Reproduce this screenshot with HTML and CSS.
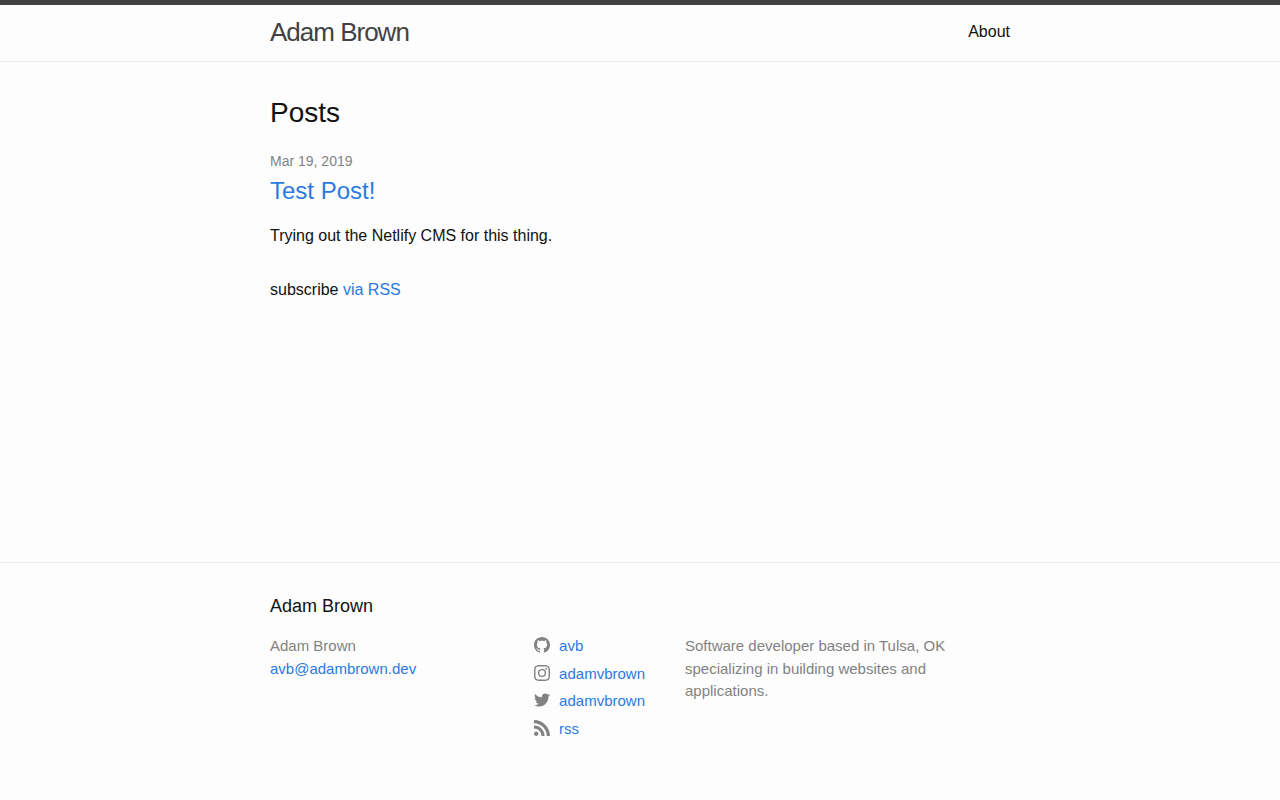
FILE: index.html
```html
<!DOCTYPE html>
<html lang="en">
<head>
    <meta charset="UTF-8">
    <meta name="viewport" content="width=device-width, initial-scale=1.0">
    <title>Adam Brown</title>
    <link rel="stylesheet" href="styles.css">
</head>
<body>
    <header class="site-header">
        <div class="wrapper header-row">
            <a class="site-title" href="/">Adam Brown</a>
            <nav class="site-nav">
                <a class="page-link" href="/about/">About</a>
            </nav>
        </div>
    </header>

    <main class="page-content">
        <div class="wrapper">
            <h2 class="post-list-heading">Posts</h2>
            <ul class="post-list">
                <li>
                    <span class="post-meta">Mar 19, 2019</span>
                    <h3 class="post-title">
                        <a class="post-link" href="/test-post/">Test Post!</a>
                    </h3>
                    <p>Trying out the Netlify CMS for this thing.</p>
                </li>
            </ul>
            <p class="rss-subscribe">subscribe <a href="/feed.xml">via RSS</a></p>
        </div>
    </main>

    <footer class="site-footer">
        <div class="wrapper">
            <h2 class="footer-heading">Adam Brown</h2>
            <div class="footer-cols">
                <ul class="contact-list footer-col-1">
                    <li>Adam Brown</li>
                    <li><a href="mailto:avb@adambrown.dev">avb@adambrown.dev</a></li>
                </ul>
                <ul class="social-list footer-col-2">
                    <li>
                        <a href="https://github.com/avb">
                            <svg class="svg-icon" viewBox="0 0 16 16" aria-hidden="true"><path fill-rule="evenodd" d="M8 0C3.58 0 0 3.582 0 8c0 3.535 2.292 6.533 5.47 7.59.4.075.547-.172.547-.385 0-.19-.007-.693-.01-1.36-2.226.483-2.695-1.073-2.695-1.073-.364-.924-.89-1.17-.89-1.17-.725-.496.056-.486.056-.486.803.056 1.225.824 1.225.824.714 1.223 1.873.87 2.33.665.072-.517.278-.87.507-1.07-1.777-.2-3.644-.888-3.644-3.953 0-.873.31-1.587.823-2.147-.083-.202-.358-1.015.077-2.117 0 0 .672-.215 2.2.82.638-.178 1.323-.266 2.003-.27.68.004 1.364.092 2.003.27 1.527-1.035 2.198-.82 2.198-.82.437 1.102.163 1.915.08 2.117.513.56.823 1.274.823 2.147 0 3.073-1.87 3.75-3.653 3.947.287.246.543.735.543 1.48 0 1.07-.01 1.933-.01 2.195 0 .215.144.463.55.385C13.71 14.53 16 11.534 16 8c0-4.418-3.582-8-8-8z"/></svg>
                            <span>avb</span>
                        </a>
                    </li>
                    <li>
                        <a href="https://instagram.com/adamvbrown">
                            <svg class="svg-icon" viewBox="0 0 16 16" aria-hidden="true"><path fill-rule="evenodd" d="M8 0C5.827 0 5.555.01 4.702.048 3.85.087 3.269.222 2.76.42a3.92 3.92 0 0 0-1.417.923A3.92 3.92 0 0 0 .42 2.76C.222 3.269.087 3.85.048 4.702.01 5.555 0 5.827 0 8s.01 2.445.048 3.298c.039.852.174 1.433.372 1.942.205.526.478.972.923 1.417.445.445.891.718 1.417.923.509.198 1.09.333 1.942.372C5.555 15.99 5.827 16 8 16s2.445-.01 3.298-.048c.852-.039 1.433-.174 1.942-.372a3.92 3.92 0 0 0 1.417-.923 3.92 3.92 0 0 0 .923-1.417c.198-.509.333-1.09.372-1.942.038-.853.048-1.125.048-3.298s-.01-2.445-.048-3.298c-.039-.852-.174-1.433-.372-1.942a3.92 3.92 0 0 0-.923-1.417A3.92 3.92 0 0 0 13.24.42c-.509-.198-1.09-.333-1.942-.372C10.445.01 10.173 0 8 0zm0 1.441c2.136 0 2.389.009 3.232.047.78.036 1.203.166 1.485.276.374.145.64.318.92.598.28.28.453.546.598.92.11.282.24.705.276 1.485.038.843.047 1.096.047 3.233s-.009 2.389-.047 3.232c-.036.78-.166 1.203-.276 1.485-.145.374-.318.64-.598.92-.28.28-.546.453-.92.598-.282.11-.705.24-1.485.276-.843.038-1.096.047-3.232.047s-2.39-.009-3.233-.047c-.78-.036-1.203-.166-1.485-.276a2.48 2.48 0 0 1-.92-.598 2.48 2.48 0 0 1-.598-.92c-.11-.282-.24-.705-.276-1.485-.038-.843-.047-1.096-.047-3.232s.009-2.39.047-3.233c.036-.78.166-1.203.276-1.485.145-.374.318-.64.598-.92.28-.28.546-.453.92-.598.282-.11.705-.24 1.485-.276C5.61 1.45 5.864 1.441 8 1.441zM8 3.892a4.108 4.108 0 1 0 0 8.216 4.108 4.108 0 0 0 0-8.216zm0 6.775a2.667 2.667 0 1 1 0-5.334 2.667 2.667 0 0 1 0 5.334zm5.23-6.937a.96.96 0 1 1-1.92 0 .96.96 0 0 1 1.92 0z"/></svg>
                            <span>adamvbrown</span>
                        </a>
                    </li>
                    <li>
                        <a href="https://twitter.com/adamvbrown">
                            <svg class="svg-icon" viewBox="0 0 16 16" aria-hidden="true"><path d="M16 3.038c-.59.26-1.22.437-1.885.517.677-.407 1.198-1.05 1.443-1.816-.634.375-1.337.648-2.085.795-.598-.638-1.45-1.036-2.396-1.036-1.812 0-3.282 1.468-3.282 3.28 0 .258.03.51.085.75C5.152 5.39 2.733 4.084 1.114 2.1.83 2.583.67 3.147.67 3.75c0 1.14.58 2.143 1.46 2.732-.538-.017-1.045-.165-1.487-.41v.04c0 1.59 1.13 2.918 2.633 3.22-.276.074-.566.114-.865.114-.21 0-.416-.02-.617-.058.418 1.304 1.63 2.253 3.067 2.28-1.124.88-2.54 1.404-4.077 1.404-.265 0-.526-.015-.783-.045 1.453.93 3.178 1.474 5.032 1.474 6.038 0 9.34-5 9.34-9.338 0-.143-.004-.284-.01-.425.64-.463 1.198-1.04 1.638-1.7z"/></svg>
                            <span>adamvbrown</span>
                        </a>
                    </li>
                    <li>
                        <a href="/feed.xml">
                            <svg class="svg-icon" viewBox="0 0 16 16" aria-hidden="true"><path d="M12.8 16C12.8 8.978 7.022 3.2 0 3.2V0c8.777 0 16 7.223 16 16h-3.2zM2.194 11.61c1.21 0 2.195.985 2.195 2.196 0 1.21-.99 2.194-2.2 2.194C.98 16 0 15.017 0 13.806c0-1.21.983-2.195 2.194-2.195zM10.606 16h-3.11c0-4.113-3.383-7.497-7.496-7.497v-3.11c5.818 0 10.606 4.79 10.606 10.607z"/></svg>
                            <span>rss</span>
                        </a>
                    </li>
                </ul>
                <p class="footer-col-3">Software developer based in Tulsa, OK specializing in building websites and applications.</p>
            </div>
        </div>
    </footer>
</body>
</html>
```
FILE: styles.css
```css
* { margin: 0; padding: 0; box-sizing: border-box; }
body {
    display: flex;
    flex-direction: column;
    min-height: 100vh;
    font-family: "Liberation Sans", Arial, sans-serif;
    font-size: 16px;
    line-height: 24px;
    color: #111;
    background: #fdfdfd;
}
a { color: #2a7ae2; text-decoration: none; }
a:hover { color: #111; text-decoration: underline; }
ul { list-style: none; }
h2, h3 { font-weight: 400; }

.wrapper {
    width: 100%;
    max-width: 800px;
    margin: 0 auto;
    padding: 0 30px;
}

/* Header */
.site-header {
    border-top: 5px solid #424242;
    border-bottom: 1px solid #e8e8e8;
}
.header-row {
    display: flex;
    justify-content: space-between;
    line-height: 54px;
    min-height: 56px;
}
.site-title {
    font-size: 26px;
    font-weight: 300;
    letter-spacing: -1px;
    color: #424242;
}
.page-link { color: #111; }

/* Posts */
.page-content { flex: 1; padding: 30px 0; }
.post-list-heading {
    font-size: 28px;
    line-height: 42px;
    margin-bottom: 15px;
}
.post-list { margin-bottom: 30px; }
.post-meta { font-size: 14px; color: #828282; }
.post-title {
    font-size: 24px;
    line-height: 36px;
    margin-bottom: 15px;
}

/* Footer */
.site-footer {
    border-top: 1px solid #e8e8e8;
    padding: 30px 0;
    min-height: 238px;
}
.footer-heading {
    font-size: 18px;
    line-height: 27px;
    margin-bottom: 15px;
}
.footer-cols {
    display: flex;
    font-size: 15px;
    line-height: 1.5;
    color: #828282;
}
.footer-col-1 { flex: 1; }
.footer-col-2 { padding: 0 40px 0 15px; }
.footer-col-3 { width: 325px; padding-right: 60px; }
.social-list li { margin-bottom: 5px; }
.social-list a { display: flex; align-items: flex-start; }
.svg-icon {
    width: 16px;
    height: 16px;
    margin: 2px 9px 0 0;
    fill: #828282;
}
```
